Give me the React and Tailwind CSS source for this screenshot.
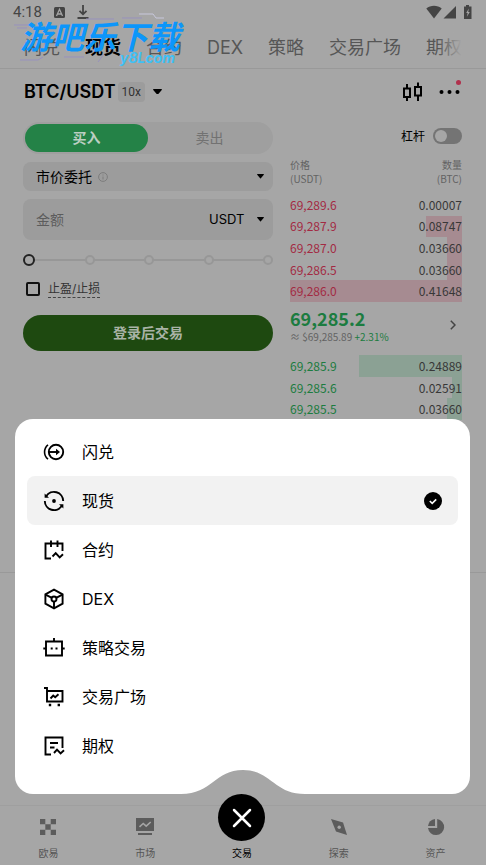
import React, { useState } from 'react';

const tabs = ['闪兑', '现货', '合约', 'DEX', '策略', '交易广场', '期权'];

const asks = [
  { price: '69,289.6', amount: '0.00007', depth: 0 },
  { price: '69,287.9', amount: '0.08747', depth: 21 },
  { price: '69,287.0', amount: '0.03660', depth: 9 },
  { price: '69,286.5', amount: '0.03660', depth: 9 },
  { price: '69,286.0', amount: '0.41648', depth: 100 }
];

const bids = [
  { price: '69,285.9', amount: '0.24889', depth: 60 },
  { price: '69,285.6', amount: '0.02591', depth: 6 },
  { price: '69,285.5', amount: '0.03660', depth: 9 }
];

const Icon = ({ children }) => (
  <svg viewBox="0 0 22 22" className="size-[22px] shrink-0" fill="none" stroke="currentColor" strokeWidth="1.9" aria-hidden="true">
    {children}
  </svg>
);

const menu = [
  {
    name: '闪兑',
    icon: (
      <Icon>
        <circle cx="13" cy="11" r="7.2" />
        <path d="M5 3.8C.4 7.5.4 14.5 5 18.2" strokeWidth="1.6" />
        <path d="M6 11h9" />
        <path d="M13 7.8 17 11l-4 3.2z" fill="currentColor" stroke="none" />
      </Icon>
    )
  },
  {
    name: '现货',
    icon: (
      <Icon>
        <path d="M3.2 6.2A9.200 9.200 0 0 1 20.200 11" />
        <path d="M18.800 15.800A9.200 9.200 0 0 1 1.800 11" />
        <path d="M1.600 3.400v4.400H6z" fill="currentColor" stroke="none" />
        <path d="M20.400 18.600v-4.400H16z" fill="currentColor" stroke="none" />
        <circle cx="11" cy="11" r="1.9" fill="currentColor" stroke="none" />
      </Icon>
    )
  },
  {
    name: '合约',
    icon: (
      <Icon>
        <path d="M8 19.5H2.5V4.5h17V12" />
        <path d="M8 1.5V8M14.5 1.5V8" />
        <path d="m9.500 17.500 3.200-3.400 4 4.400 3.300-3.200" />
      </Icon>
    )
  },
  {
    name: 'DEX',
    icon: (
      <Icon>
        <path d="m11 1.600 8.600 4.700v9.400L11 20.400l-8.600-4.700V6.300z" />
        <circle cx="11" cy="11" r="2.5" />
        <path d="m3 6.800 5.900 3M19 6.800l-5.900 3M11 13.500V20" />
      </Icon>
    )
  },
  {
    name: '策略交易',
    icon: (
      <Icon>
        <path d="M3 4.5h16v14H3z" />
        <path d="M11 1v3.5M.3 11.5H3M19 11.5h2.7" />
        <path d="M7.700 11.5h2M12.500 11.5h2" />
      </Icon>
    )
  },
  {
    name: '交易广场',
    icon: (
      <Icon>
        <path d="M1 2h3v13.500h15.500V5H4" />
        <path d="m7.500 12.500 2.700-3 2 1.800 3.300-3" />
        <path d="M5.800 19h2.400M14.600 19H17" strokeWidth="2.4" />
      </Icon>
    )
  },
  {
    name: '期权',
    icon: (
      <Icon>
        <path d="M8 19.5H2.5V2.5h17V13" />
        <path d="M7 8h8M7 12.5h4.500" />
        <path d="m11 18 3-3.400 3.600 3.900 3.400-3.200" />
      </Icon>
    )
  }
];

const Caret = ({ className }) => (
  <svg viewBox="0 0 8 5" className={`shrink-0 pointer-events-none ${className}`} aria-hidden="true">
    <path d="M.6 0h6.800a.5.5 0 0 1 .4.8L4.400 4.800a.5.5 0 0 1-.8 0L.2.8A.5.5 0 0 1 .6 0z" fill="#000" />
  </svg>
);

const StatusBar = () => (
  <div className="flex h-6 items-center pl-[13px] pr-3.5 text-[#444]">
    <span className="font-[Roboto] text-[15px] leading-6">4:18</span>
    <svg viewBox="0 0 11 11" className="ml-3 size-[11px]" aria-hidden="true">
      <rect width="11" height="11" rx="1.5" fill="#444" />
      <path d="M2.500 9 5.500 2.300 8.500 9M3.800 7h3.400" fill="none" stroke="#a6a6a6" strokeWidth="1.3" />
    </svg>
    <svg viewBox="0 0 12 14" className="ml-3 h-3.5 w-3" fill="none" stroke="#444" strokeWidth="1.8" aria-hidden="true">
      <path d="M6 0v9M2.500 5.800 6 9.300l3.500-3.500M.5 13h11" />
    </svg>
    <svg viewBox="0 0 46 14" className="ml-auto h-3.5 w-[46px]" fill="#444" aria-hidden="true">
      <path d="M8 13.500.3 3.500C4.500-.3 11.500-.3 15.700 3.500z" />
      <path d="M30 1v12.500H17.500z" />
      <path d="M40 0h3v1.500h2.500V14H38V1.500h2z" />
      <path d="m42.800 3.500-2.600 4.500h1.500l-.8 3.700 2.900-4.700h-1.600z" fill="#a6a6a6" />
    </svg>
  </div>
);

const Watermark = () => (
  <div className="pointer-events-none absolute left-5 top-3.5 italic" aria-hidden="true">
    <svg viewBox="0 0 176 56" className="absolute -left-2 -top-1 h-14 w-44" fill="none" stroke="#9791bd" strokeWidth="1">
      <path d="M2 15h16M5 18h10M74 9h28M110 8h20M8 50h18l5-3M52 47h20M160 26l10-10M86 52l6-8" />
      <path d="M127 4h14l3 4h8" stroke="#c8c8dc" />
    </svg>
    <p className="relative text-[32px] font-bold leading-[48px] text-[#0c96fb]">游吧乐下载</p>
    <p className="absolute left-[100px] top-[34px] text-sm font-bold leading-5 text-[#3fc0f5]">y8Lcom</p>
  </div>
);

const TopTabs = () => (
  <nav className="relative h-[45px] overflow-hidden border-b border-[#999]">
    <div className="flex h-full items-center gap-[25px] whitespace-nowrap px-6 pt-[3px] text-lg leading-6 text-[#565656]">
      {tabs.map((tab) => (
        <button key={tab} className={tab === '现货' ? 'shrink-0 font-bold text-black' : 'shrink-0'}>
          {tab}
        </button>
      ))}
    </div>
    <div className="absolute inset-y-0 right-6 w-6 bg-linear-to-r from-transparent to-[#a6a6a6]" />
  </nav>
);

const PairHeader = () => (
  <header className="flex h-[45px] items-center pl-6 pr-[25px]">
    <h1 className="text-lg font-semibold">BTC/USDT</h1>
    <span className="ml-0.5 rounded bg-[#9c9c9c] px-1 font-[Roboto] text-xs leading-5 text-[#333]">10x</span>
    <button aria-label="选择交易对" className="ml-2">
      <Caret className="w-[9px]" />
    </button>
    <button aria-label="K线" className="ml-auto">
      <svg viewBox="0 0 20 20" className="size-5" fill="none" stroke="#000" strokeWidth="2" aria-hidden="true">
        <path d="M1 6.500h6v8.500H1zM12 5h6v8.500h-6zM4 2v4.500M4 15v4M15 .5V5M15 13.500V19" />
      </svg>
    </button>
    <button aria-label="更多" className="relative ml-4">
      <svg viewBox="0 0 22 20" className="h-5 w-[22px]" aria-hidden="true">
        <circle cx="2.500" cy="10" r="2" />
        <circle cx="10.500" cy="10" r="2" />
        <circle cx="18.500" cy="10" r="2" />
      </svg>
      <span className="absolute -top-0.5 right-0 size-[5px] rounded-full bg-[#b0304c]" />
    </button>
  </header>
);

const OrderForm = () => {
  const [amount, setAmount] = useState('');
  const [percent, setPercent] = useState(0);

  return (
    <form onSubmit={(e) => e.preventDefault()}>
      <div className="flex h-8 rounded-full bg-[#9f9f9f] p-0.5 text-sm">
        <button type="button" className="flex-1 rounded-full bg-[#248247] font-bold text-[#bccfc3]">买入</button>
        <button type="button" className="flex-1 text-[#727272]">卖出</button>
      </div>

      <div className="mt-2 flex h-[29px] items-center rounded-lg bg-[#9c9c9c] pl-[13px] pr-[9px]">
        <select aria-label="委托类型" className="appearance-none text-sm">
          <option>市价委托</option>
        </select>
        <svg viewBox="0 0 10 10" className="ml-1.5 size-2.5" fill="none" stroke="#7d7d7d" aria-hidden="true">
          <circle cx="5" cy="5" r="4.4" />
          <path d="M5 4.500v3M5 2.500v1" />
        </svg>
        <Caret className="ml-auto w-[7px]" />
      </div>

      <div className="mt-2 flex h-[41px] items-center rounded-lg bg-[#9c9c9c] pl-[13px] pr-[9px]">
        <input
          aria-label="金额"
          placeholder="金额"
          value={amount}
          onChange={(e) => setAmount(e.target.value)}
          className="min-w-0 flex-1 text-sm outline-none placeholder:text-[#5c5c5c]"
        />
        <select aria-label="币种" className="appearance-none text-[13px]">
          <option>USDT</option>
        </select>
        <Caret className="ml-3 w-[7px]" />
      </div>

      <div className="relative mt-3.5 flex h-3 items-center justify-between">
        <div className="absolute inset-x-1.5 h-0.5 bg-[#979797]" />
        <span className="relative size-3 rounded-full border-2 border-[#222] bg-[#a6a6a6]" />
        {[25, 50, 75, 100].map((step) => (
          <span key={step} className="relative size-2.5 rounded-full border-2 border-[#979797] bg-[#a6a6a6]" />
        ))}
        <input
          type="range"
          aria-label="仓位比例"
          min="0"
          max="100"
          step="25"
          value={percent}
          onChange={(e) => setPercent(Number(e.target.value))}
          className="absolute inset-0 w-full opacity-0"
        />
      </div>

      <label className="mt-3.5 flex h-[18px] items-center gap-2 pl-[3px] text-xs leading-4 text-[#333]">
        <input type="checkbox" className="size-3.5 appearance-none rounded-xs border-2 border-[#111]" />
        <span className="border-b border-dashed border-[#444]">止盈/止损</span>
      </label>

      <button className="mt-[17px] h-9 w-full rounded-full bg-[#1e4910] text-sm font-bold text-[#a9b3a6]">
        登录后交易
      </button>
    </form>
  );
};

const BookRow = ({ row, textClass, barClass }) => (
  <li className="relative flex flex-1 items-center justify-between">
    <span className={`absolute inset-y-0 right-0 ${barClass}`} style={{ width: `${row.depth}%` }} />
    <span className={`relative ${textClass}`}>{row.price}</span>
    <span className="relative text-[#383838]">{row.amount}</span>
  </li>
);

const OrderBook = () => (
  <section className="font-['Noto_Sans_CJK_SC',sans-serif]">
    <label className="flex h-7 items-center justify-end gap-2 text-xs">
      杠杆
      <input
        type="checkbox"
        role="switch"
        className="flex h-4 w-[29px] appearance-none items-center rounded-full bg-[#747474] px-0.5 before:size-3 before:rounded-full before:bg-[#a6a6a6]"
      />
    </label>
    <div className="mt-2 flex justify-between text-[10px] leading-[14px] text-[#636363]">
      <p>价格<br />(USDT)</p>
      <p className="text-right">数量<br />(BTC)</p>
    </div>
    <ul className="mt-2 flex h-[108px] flex-col text-xs">
      {asks.map((row) => (
        <BookRow key={row.price} row={row} textClass="text-[#a32a43]" barClass="bg-[#a68b91]" />
      ))}
    </ul>
    <div className="flex h-[53px] items-center justify-between pb-2 pr-1.5">
      <div>
        <p className="text-lg font-bold leading-6 text-[#1c7c40]">69,285.2</p>
        <p className="text-[10px] leading-[14px] text-[#636363]">
          ≈ $69,285.89 <span className="text-[#1c7c40]">+2.31%</span>
        </p>
      </div>
      <svg viewBox="0 0 6 10" className="h-2.5 w-1.5" fill="none" stroke="#444" strokeWidth="1.5" aria-hidden="true">
        <path d="m.8.8 4.200 4.200L.8 9.200" />
      </svg>
    </div>
    <ul className="flex h-[65px] flex-col text-xs">
      {bids.map((row) => (
        <BookRow key={row.price} row={row} textClass="text-[#1c7c40]" barClass="bg-[#8ba194]" />
      ))}
    </ul>
  </section>
);

const TradeSheet = ({ selected, onSelect }) => (
  <section className="absolute bottom-[71px] left-[15px] right-4 rounded-[18px] bg-white px-3 pb-6 pt-2">
    <ul>
      {menu.map((item) => (
        <li key={item.name}>
          <button
            onClick={() => onSelect(item.name)}
            className={`flex h-[49px] w-full items-center gap-[17px] rounded-lg px-4 text-base ${selected === item.name ? 'bg-[#f2f2f2]' : ''}`}
          >
            {item.icon}
            {item.name}
            {selected === item.name && (
              <svg viewBox="0 0 18 18" className="ml-auto size-[18px]" aria-hidden="true">
                <circle cx="9" cy="9" r="9" />
                <path d="m5.800 9 2.400 2.400 4-4" fill="none" stroke="#fff" strokeWidth="1.6" />
              </svg>
            )}
          </button>
        </li>
      ))}
    </ul>
    {/* curve that leaves room for the close button */}
    <svg viewBox="0 0 124 24" className="absolute bottom-0 left-1/2 h-6 w-[124px] -translate-x-1/2" fill="#a6a6a6" aria-hidden="true">
      <path d="M0 24C31 24 34 0 62 0s31 24 62 24z" />
    </svg>
  </section>
);

const navItems = [
  {
    name: '欧易',
    icon: <path d="M1 1h5.300v5.300H1zM11.700 1H17v5.300h-5.300zM6.300 6.300h5.400v5.400H6.300zM1 11.700h5.300V17H1zM11.700 11.700H17V17h-5.300z" />
  },
  {
    name: '市场',
    icon: (
      <>
        <path d="M0 0h18v13H0zM2 15h14v2H2z" />
        <path d="m3.500 8.800 3.700-3.300 3 2.700 4.500-4.200" fill="none" stroke="#a6a6a6" strokeWidth="1.6" />
      </>
    )
  },
  { name: '交易', icon: null },
  {
    name: '探索',
    icon: (
      <>
        <path d="m1 1 12 3.500L17 17 6 13.500z" />
        <circle cx="9.200" cy="9.300" r="1.7" fill="#a6a6a6" />
      </>
    )
  },
  {
    name: '资产',
    icon: (
      <>
        <path d="M10.200 1A8.100 8.100 0 1 1 1 10h9.200z" />
        <path d="M8 1v7H1A7.500 7.500 0 0 1 8 1z" />
      </>
    )
  }
];

const BottomNav = () => (
  <nav className="absolute inset-x-0 bottom-0 grid h-[60px] grid-cols-5 grid-rows-[60px] border-t border-[#9f9f9f] pr-0.5 text-[10px] leading-[14px] text-[#555]">
    {navItems.map((item) =>
      item.icon ? (
        <button key={item.name} className="flex flex-col items-center justify-end gap-2.5 pb-1.5">
          <svg viewBox="0 0 18 18" className="size-[18px]" fill="#5c5c5c" aria-hidden="true">
            {item.icon}
          </svg>
          {item.name}
        </button>
      ) : (
        <button key={item.name} className="flex flex-col items-center justify-end gap-[5px] pb-1.5 text-black">
          <span className="flex size-[47px] shrink-0 items-center justify-center rounded-full bg-black">
            <svg viewBox="0 0 20 20" className="size-5" stroke="#fff" strokeWidth="2.5" strokeLinecap="round" aria-hidden="true">
              <path d="m2 2 16 16M18 2 2 18" />
            </svg>
          </span>
          {item.name}
        </button>
      )
    )}
  </nav>
);

const App = () => {
  const [selected, setSelected] = useState('现货');

  return (
    <div className="relative min-h-screen overflow-hidden bg-[#a6a6a6] font-['Inter','Noto_Sans_CJK_SC',sans-serif] text-black">
      <StatusBar />
      <TopTabs />
      <PairHeader />
      <main className="grid grid-cols-[minmax(0,250fr)_minmax(0,172fr)] gap-[17px] border-b border-[#999] pb-[152px] pl-[23px] pr-6 pt-2">
        <OrderForm />
        <OrderBook />
      </main>
      <TradeSheet selected={selected} onSelect={setSelected} />
      <BottomNav />
      <Watermark />
    </div>
  );
};

export default App;
